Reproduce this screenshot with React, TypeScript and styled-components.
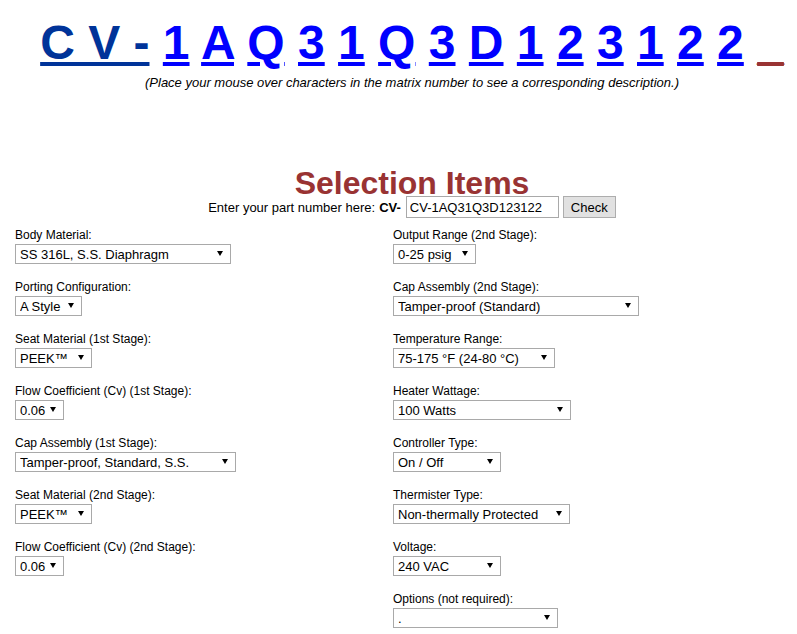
import React from "react";
import styled, { createGlobalStyle } from "styled-components";

const GlobalStyle = createGlobalStyle`
  html, body { background: #ffffff; }
  body {
    margin: 8px;
    font-family: "Liberation Sans", Arial, sans-serif;
    color: #000000;
    overflow-x: hidden;
  }
`;

const Page = styled.div`
  padding-top: 8px;
`;

const Centered = styled.div`
  padding-left: 27px;
  text-align: center;
`;

const Matrix = styled.div`
  font-size: 48px;
  font-weight: bold;
  line-height: 54px;
  white-space: nowrap;
`;

type Tone = "prefix" | "char" | "end";
const toneColor: Record<Tone, string> = {
  prefix: "#003399",
  char: "#0000ff",
  end: "#993333",
};

const MatrixLink = styled.a<{ $tone: Tone }>`
  color: ${(p) => toneColor[p.$tone]};
  text-decoration: underline;
  cursor: pointer;
`;

const Hint = styled.div`
  margin-top: 5px;
  font-size: 13px;
  font-style: italic;
  line-height: 15px;
`;

const Heading = styled.h1`
  margin: 80px 0 0;
  font-size: 32px;
  line-height: 26px;
  font-weight: bold;
  color: #993333;
`;

const PartRow = styled.div`
  display: flex;
  justify-content: center;
  align-items: center;
  height: 22px;
  font-size: 13px;
`;

const PartPrefix = styled.b`
  margin-left: 4px;
`;

const PartInput = styled.input`
  box-sizing: border-box;
  width: 153px;
  height: 22px;
  margin: 0 0 0 5px;
  padding: 0 3px;
  border: 1px solid #a9a9a9;
  border-radius: 0;
  font: 13px "Liberation Sans", Arial, sans-serif;
  color: #000;
`;

const CheckButton = styled.button`
  box-sizing: border-box;
  width: 53px;
  height: 22px;
  margin-left: 4px;
  padding: 0;
  border: 1px solid #adadad;
  border-radius: 0;
  background: #e1e1e1;
  font: 13px "Liberation Sans", Arial, sans-serif;
  color: #000;
`;

const Columns = styled.div`
  margin: 10px 0 0 7px;
  display: grid;
  grid-template-columns: 378px 1fr;
`;

const Column = styled.div`
  display: flex;
  flex-direction: column;
  gap: 16px;
`;

const Item = styled.div`
  display: flex;
  flex-direction: column;
  align-items: flex-start;
`;

const Label = styled.label`
  font-size: 12px;
  line-height: 14px;
  margin-bottom: 2px;
`;

const SelectBox = styled.span`
  position: relative;
  display: inline-block;
`;

const Select = styled.select<{ $w: number }>`
  display: block;
  box-sizing: border-box;
  width: ${(p) => p.$w}px;
  height: 20px;
  margin: 0;
  padding: 0 0 0 4px;
  appearance: none;
  -webkit-appearance: none;
  border: 1px solid #a9a9a9;
  border-radius: 0;
  background: #ffffff;
  font: 13px "Liberation Sans", Arial, sans-serif;
  color: #000;
`;

const Arrow = styled.span`
  position: absolute;
  right: 8px;
  top: 7px;
  width: 0;
  height: 0;
  border-left: 3.5px solid transparent;
  border-right: 3.5px solid transparent;
  border-top: 5px solid #000;
  pointer-events: none;
`;

type Field = { label: string; value: string; w: number };

const left: Field[] = [
  { label: "Body Material:", value: "SS 316L, S.S. Diaphragm", w: 216 },
  { label: "Porting Configuration:", value: "A Style", w: 67 },
  { label: "Seat Material (1st Stage):", value: "PEEK™", w: 77 },
  { label: "Flow Coefficient (Cv) (1st Stage):", value: "0.06", w: 49 },
  { label: "Cap Assembly (1st Stage):", value: "Tamper-proof, Standard, S.S.", w: 221 },
  { label: "Seat Material (2nd Stage):", value: "PEEK™", w: 77 },
  { label: "Flow Coefficient (Cv) (2nd Stage):", value: "0.06", w: 49 },
];

const right: Field[] = [
  { label: "Output Range (2nd Stage):", value: "0-25 psig", w: 83 },
  { label: "Cap Assembly (2nd Stage):", value: "Tamper-proof (Standard)", w: 246 },
  { label: "Temperature Range:", value: "75-175 °F (24-80 °C)", w: 162 },
  { label: "Heater Wattage:", value: "100 Watts", w: 178 },
  { label: "Controller Type:", value: "On / Off", w: 108 },
  { label: "Thermister Type:", value: "Non-thermally Protected", w: 177 },
  { label: "Voltage:", value: "240 VAC", w: 108 },
  { label: "Options (not required):", value: ".", w: 165 },
];

const chars = ["1", "A", "Q", "3", "1", "Q", "3", "D", "1", "2", "3", "1", "2", "2"];

function FieldItem({ f }: { f: Field }) {
  return (
    <Item>
      <Label>{f.label}</Label>
      <SelectBox>
        <Select $w={f.w} defaultValue={f.value}>
          <option value={f.value}>{f.value}</option>
        </Select>
        <Arrow />
      </SelectBox>
    </Item>
  );
}

export default function App() {
  return (
    <>
      <GlobalStyle />
      <Page>
        <Centered>
          <Matrix>
            <MatrixLink $tone="prefix">C V -</MatrixLink>
            {chars.map((c, i) => (
              <React.Fragment key={i}>
                {" "}
                <MatrixLink $tone="char">{c}</MatrixLink>
              </React.Fragment>
            ))}{" "}
            <MatrixLink $tone="end">_</MatrixLink>
          </Matrix>
          <Hint>
            (Place your mouse over characters in the matrix number to see a corresponding description.)
          </Hint>
          <Heading>Selection Items</Heading>
          <PartRow>
            <span>Enter your part number here:</span>
            <PartPrefix>CV-</PartPrefix>
            <PartInput defaultValue="CV-1AQ31Q3D123122" />
            <CheckButton>Check</CheckButton>
          </PartRow>
        </Centered>
        <Columns>
          <Column>
            {left.map((f, i) => (
              <FieldItem key={i} f={f} />
            ))}
          </Column>
          <Column>
            {right.map((f, i) => (
              <FieldItem key={i} f={f} />
            ))}
          </Column>
        </Columns>
      </Page>
    </>
  );
}
